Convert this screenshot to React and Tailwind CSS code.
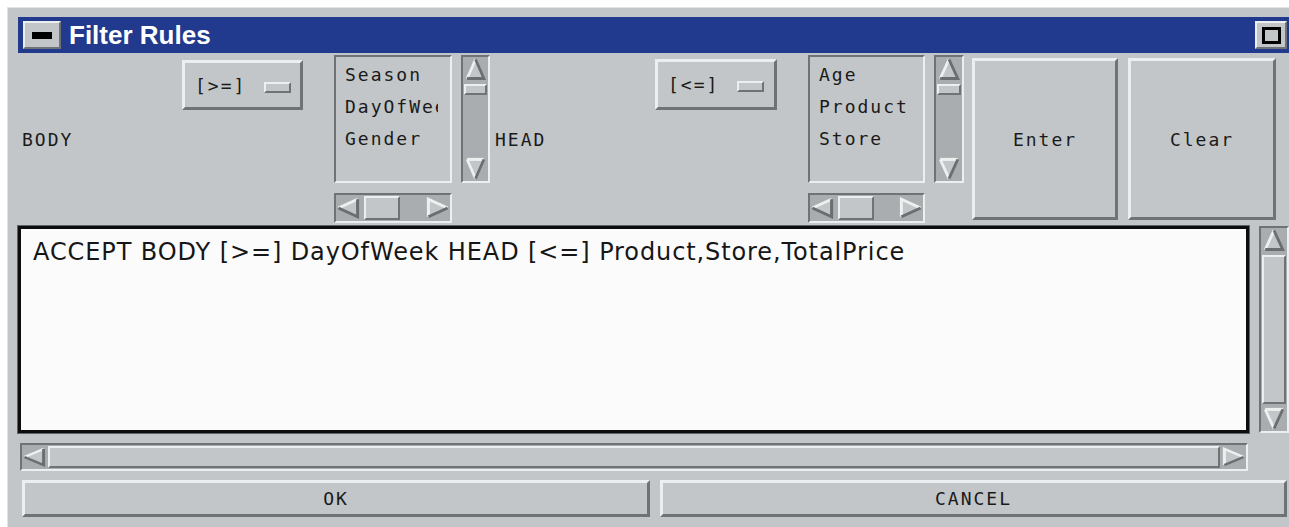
import React from 'react';

// bevel presets for the Motif-style widgets
const raised =
  'border-[3px] border-t-[#eceeef] border-l-[#eceeef] border-r-[#6f7375] border-b-[#6f7375]';
const raisedThin =
  'border-2 border-t-[#eceeef] border-l-[#eceeef] border-r-[#6f7375] border-b-[#6f7375]';
const sunken =
  'border-2 border-t-[#6f7375] border-l-[#6f7375] border-r-[#eceeef] border-b-[#eceeef]';

const mono = "font-['DejaVu_Sans_Mono',monospace] text-[18px] tracking-[2px] text-[#1a1a1a]";

const LIGHT = '#eef0f0';
const DARK = '#6a6e70';

function Arrow({ dir, className }) {
  const shapes = {
    up: { pts: '10,2 18,18 2,18', light: ['M2 18L10 2'], dark: ['M10 2L18 18L2 18'] },
    down: { pts: '2,2 18,2 10,18', light: ['M2 2L18 2', 'M2 2L10 18'], dark: ['M18 2L10 18'] },
    left: { pts: '2,10 18,2 18,18', light: ['M2 10L18 2'], dark: ['M18 2L18 18L2 10'] },
    right: { pts: '2,2 18,10 2,18', light: ['M2 18L2 2L18 10'], dark: ['M2 18L18 10'] },
  };
  const s = shapes[dir];
  return (
    <svg viewBox="0 0 20 20" preserveAspectRatio="none" className={className}>
      <polygon points={s.pts} fill="#c2c6c8" />
      {s.light.map((d) => (
        <path key={d} d={d} stroke={LIGHT} strokeWidth="2.5" fill="none" />
      ))}
      {s.dark.map((d) => (
        <path key={d} d={d} stroke={DARK} strokeWidth="2.5" fill="none" />
      ))}
    </svg>
  );
}

function VScroll({ className, thumb = 'small' }) {
  return (
    <div className={`${sunken} bg-[#a9adaf] flex flex-col items-stretch ${className}`}>
      <Arrow dir="up" className="h-[24px] w-full shrink-0 px-[2px]" />
      {thumb === 'small' ? (
        <>
          <div className={`${raisedThin} bg-[#c2c6c8] h-[11px] mt-[3px] mx-[1px]`} />
          <div className="flex-1" />
        </>
      ) : (
        <div className={`${raisedThin} bg-[#c2c6c8] flex-1 my-[3px] mx-[1px]`} />
      )}
      <Arrow dir="down" className="h-[24px] w-full shrink-0 px-[2px]" />
    </div>
  );
}

function HScroll({ className, thumb = 'small' }) {
  return (
    <div className={`${sunken} bg-[#a9adaf] flex items-stretch ${className}`}>
      <Arrow dir="left" className="w-[24px] h-full shrink-0 py-[2px]" />
      {thumb === 'small' ? (
        <>
          <div className={`${raisedThin} bg-[#c2c6c8] w-[36px] ml-[4px] my-[1px]`} />
          <div className="flex-1" />
        </>
      ) : (
        <div className={`${raisedThin} bg-[#c2c6c8] flex-1 mx-[2px] my-[1px]`} />
      )}
      <Arrow dir="right" className="w-[24px] h-full shrink-0 py-[2px]" />
    </div>
  );
}

function OptionMenu({ label, className }) {
  return (
    <div className={`${raised} bg-[#c2c6c8] flex items-center pl-[10px] ${className}`}>
      <span className={`${mono} tracking-[0px] text-[18px]`}>{label}</span>
      <div className={`${raisedThin} bg-[#c2c6c8] w-[27px] h-[11px] ml-[18px] mt-[4px]`} />
    </div>
  );
}

function ListBox({ items }) {
  return (
    <div className="flex flex-col">
      <div className={`${sunken} bg-[#c2c6c8] h-[128px] pl-[9px] pr-[12px] pt-[2px]`}>
        <div className="overflow-hidden whitespace-nowrap">
          {items.map((it) => (
            <div key={it} className={`${mono} leading-[32px]`}>
              {it}
            </div>
          ))}
        </div>
      </div>
      <HScroll className="h-[30px] mt-[10px]" />
    </div>
  );
}

export default function App() {
  return (
    <div className="w-[1289px] h-[527px] bg-white overflow-hidden pt-[7px] pl-[7px]">
      <div className="w-[1282px] h-[520px] bg-[#c2c6c8] border-t border-l border-[#e2e4e4] pl-[10px] pt-[9px] flex flex-col">
        {/* title bar */}
        <div className="h-[36px] bg-[#213a8e] flex items-center">
          <div className={`${raisedThin} bg-[#c2c6c8] w-[38px] h-[28px] ml-[5px] flex items-center justify-center`}>
            <div className="w-[20px] h-[7px] bg-black" />
          </div>
          <span className="ml-[8px] font-['Liberation_Sans',Arial,sans-serif] font-bold text-[26px] text-white leading-none">
            Filter Rules
          </span>
          <div className={`${raisedThin} bg-[#c2c6c8] w-[32px] h-[28px] ml-auto mr-[2px] flex items-center justify-center`}>
            <div className="w-[19px] h-[17px] border-[3px] border-black" />
          </div>
        </div>

        {/* rule builder controls */}
        <div className="h-[173px] flex items-start">
          <div className={`${mono} w-[164px] pl-[4px] self-center`}>BODY</div>
          <OptionMenu label="[>=]" className="w-[121px] h-[50px] mt-[7px]" />
          <div className="ml-[31px] w-[118px] mt-[2px]">
            <ListBox items={['Season', 'DayOfWeek', 'Gender']} />
          </div>
          <VScroll className="ml-[9px] w-[29px] h-[128px] mt-[2px]" />
          <div className={`${mono} w-[165px] pl-[5px] self-center`}>HEAD</div>
          <OptionMenu label="[<=]" className="w-[122px] h-[51px] mt-[6px]" />
          <div className="ml-[31px] w-[117px] mt-[2px]">
            <ListBox items={['Age', 'Product', 'Store']} />
          </div>
          <VScroll className="ml-[9px] w-[30px] h-[128px] mt-[2px]" />
          <button className={`${raised} ${mono} bg-[#c2c6c8] ml-[8px] w-[146px] h-[162px] mt-[5px]`}>
            Enter
          </button>
          <button className={`${raised} ${mono} bg-[#c2c6c8] ml-[10px] w-[148px] h-[162px] mt-[5px]`}>
            Clear
          </button>
        </div>

        {/* rule text */}
        <div className="flex h-[207px]">
          <div className="w-[1234px] h-full bg-[#fbfbfb] border-[3px] border-[#0d0d0d] shadow-[0_0_0_1px_#5e6264] pl-[12px] pt-[9px]">
            <div className="font-['DejaVu_Sans',Verdana,sans-serif] text-[24px] leading-[28px] text-[#161616] tracking-[0.9px]">
              ACCEPT BODY [&gt;=] DayOfWeek HEAD [&lt;=] Product,Store,TotalPrice
            </div>
          </div>
          <VScroll className="ml-[10px] w-[30px] h-full" thumb="long" />
        </div>

        <HScroll className="ml-[2px] w-[1228px] h-[28px] mt-[10px]" thumb="long" />

        {/* dialog buttons */}
        <div className="flex mt-[9px]">
          <button className={`${raised} ${mono} bg-[#c2c6c8] ml-[4px] w-[628px] h-[37px] tracking-[0px]`}>
            OK
          </button>
          <button className={`${raised} ${mono} bg-[#c2c6c8] ml-[10px] w-[627px] h-[37px] tracking-[0px]`}>
            CANCEL
          </button>
        </div>
      </div>
    </div>
  );
}
